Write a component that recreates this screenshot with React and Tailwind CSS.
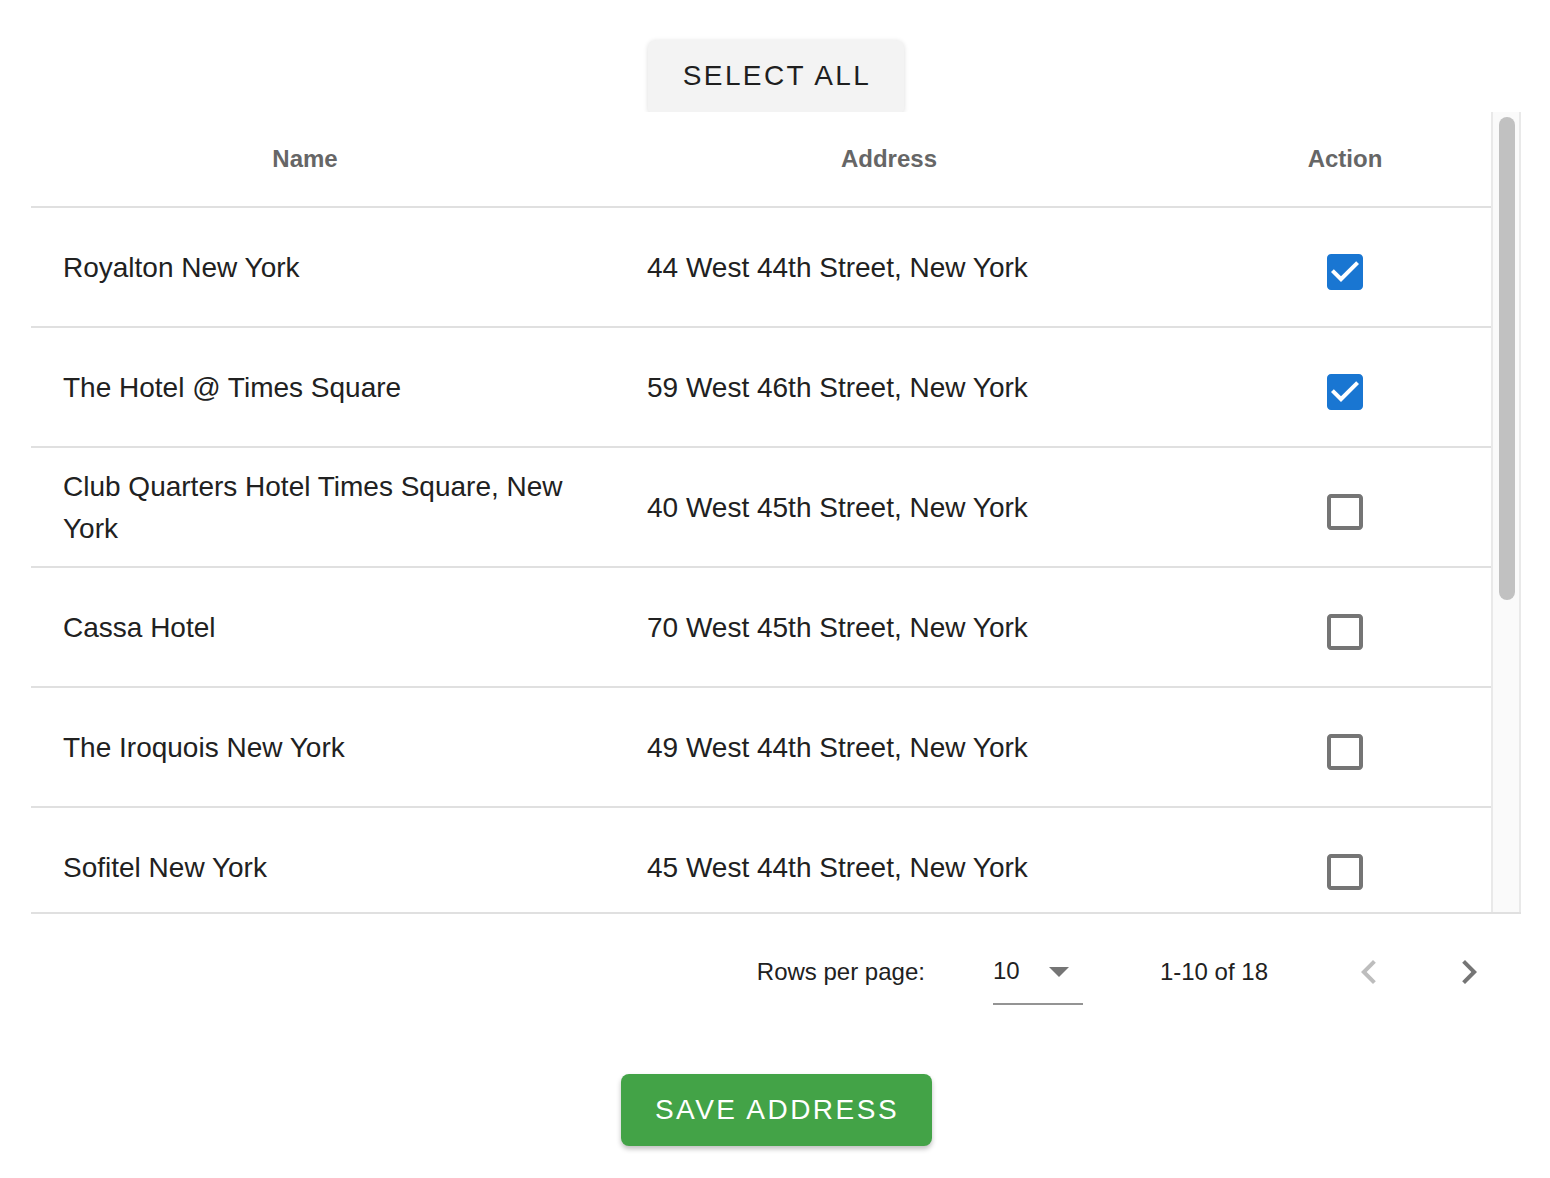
import { useState } from "react";

const hotels = [
  { name: "Royalton New York", address: "44 West 44th Street, New York", checked: true },
  { name: "The Hotel @ Times Square", address: "59 West 46th Street, New York", checked: true },
  { name: "Club Quarters Hotel Times Square, New York", address: "40 West 45th Street, New York", checked: false },
  { name: "Cassa Hotel", address: "70 West 45th Street, New York", checked: false },
  { name: "The Iroquois New York", address: "49 West 44th Street, New York", checked: false },
  { name: "Sofitel New York", address: "45 West 44th Street, New York", checked: false },
];

function CheckIcon({ checked, onClick }) {
  return (
    <button onClick={onClick} className="mt-[9px] flex items-center justify-center">
      {checked ? (
        <svg viewBox="0 0 24 24" className="h-[48px] w-[48px] fill-[#1976d2]">
          <path d="M19 3H5c-1.11 0-2 .9-2 2v14c0 1.1.89 2 2 2h14c1.11 0 2-.9 2-2V5c0-1.1-.89-2-2-2zm-9 14l-5-5 1.41-1.41L10 14.17l7.59-7.59L19 8l-9 9z" />
        </svg>
      ) : (
        <svg viewBox="0 0 24 24" className="h-[48px] w-[48px] fill-[#757575]">
          <path d="M19 5v14H5V5h14m0-2H5c-1.1 0-2 .9-2 2v14c0 1.1.9 2 2 2h14c1.1 0 2-.9 2-2V5c0-1.1-.9-2-2-2z" />
        </svg>
      )}
    </button>
  );
}

function HeadCell({ children, sortable }) {
  return (
    <div className="flex items-center justify-center px-8 text-[24px] font-bold text-[#666666]">
      <span>{children}</span>
      {sortable && <span className="w-[36px]" />}
    </div>
  );
}

export default function App() {
  const [rows, setRows] = useState(hotels);

  const toggle = (i) => {
    setRows((r) => r.map((row, j) => (j === i ? { ...row, checked: !row.checked } : row)));
  };

  const selectAll = () => setRows((r) => r.map((row) => ({ ...row, checked: true })));

  return (
    <div className="min-h-screen bg-white font-['Liberation_Sans',Arial,sans-serif] text-[#212121]">
      <div className="ml-[31px] flex w-[1490px] flex-col items-center pt-[40px] pb-[32px]">
        <button
          onClick={selectAll}
          className="h-[72px] w-[256px] rounded-t-[8px] rounded-b-[3px] bg-[#f3f3f3] pl-[2px] text-[28px] tracking-[2.4px] text-[#1f1f1f] shadow-[0_1px_5px_rgba(0,0,0,0.14)]"
        >
          SELECT ALL
        </button>

        {/* Table with scrollbar */}
        <div className="relative flex w-full border-b-2 border-[#e0e0e0] bg-white">
          <div className="h-[800px] w-[1460px] overflow-hidden">
            <div className="grid h-[96px] grid-cols-[584px_584px_292px] border-b-2 border-[#e0e0e0]">
              <HeadCell sortable>Name</HeadCell>
              <HeadCell sortable>Address</HeadCell>
              <HeadCell>Action</HeadCell>
            </div>
            {rows.map((row, i) => (
              <div
                key={row.name}
                className="grid h-[120px] grid-cols-[584px_584px_292px] border-b-2 border-[#e0e0e0] pt-[1px] text-[28px] leading-[42px]"
              >
                <div className="flex items-center px-8">{row.name}</div>
                <div className="flex items-center px-8">{row.address}</div>
                <div className="flex items-center justify-center">
                  <CheckIcon checked={row.checked} onClick={() => toggle(i)} />
                </div>
              </div>
            ))}
          </div>
          <div className="h-[800px] w-[30px] border-x-2 border-[#e9e9e9] bg-[#fafafa]">
            <div className="mt-[5px] ml-[6px] h-[483px] w-[16px] rounded-full bg-[#c1c1c1]" />
          </div>
        </div>

        {/* Pagination */}
        <div className="flex h-[116px] w-full items-center justify-end pr-[4px] text-[24px]">
          <span>Rows per page:</span>
          <div className="ml-[68px] flex h-[66px] w-[90px] items-center justify-between border-b-2 border-[#949494]">
            <span>10</span>
            <svg viewBox="0 0 24 24" className="h-[48px] w-[48px] fill-[#757575]">
              <path d="M7 10l5 5 5-5z" />
            </svg>
          </div>
          <span className="ml-[77px]">1-10 of 18</span>
          <div className="ml-[53px] flex gap-[4px]">
            <button className="flex h-[96px] w-[96px] items-center justify-center rounded-full">
              <svg viewBox="0 0 24 24" className="h-[48px] w-[48px] fill-[#bdbdbd]">
                <path d="M15.41 16.59 10.83 12l4.58-4.59L14 6l-6 6 6 6 1.41-1.41z" />
              </svg>
            </button>
            <button className="flex h-[96px] w-[96px] items-center justify-center rounded-full">
              <svg viewBox="0 0 24 24" className="h-[48px] w-[48px] fill-[#757575]">
                <path d="M8.59 16.59 13.17 12 8.59 7.41 10 6l6 6-6 6-1.41-1.41z" />
              </svg>
            </button>
          </div>
        </div>

        <button className="mt-[44px] h-[72px] w-[311px] rounded-[8px] bg-[#43a347] pl-[2px] text-[28px] tracking-[2.5px] text-white shadow-[0_3px_5px_rgba(0,0,0,0.25)]">
          SAVE ADDRESS
        </button>
      </div>
    </div>
  );
}
